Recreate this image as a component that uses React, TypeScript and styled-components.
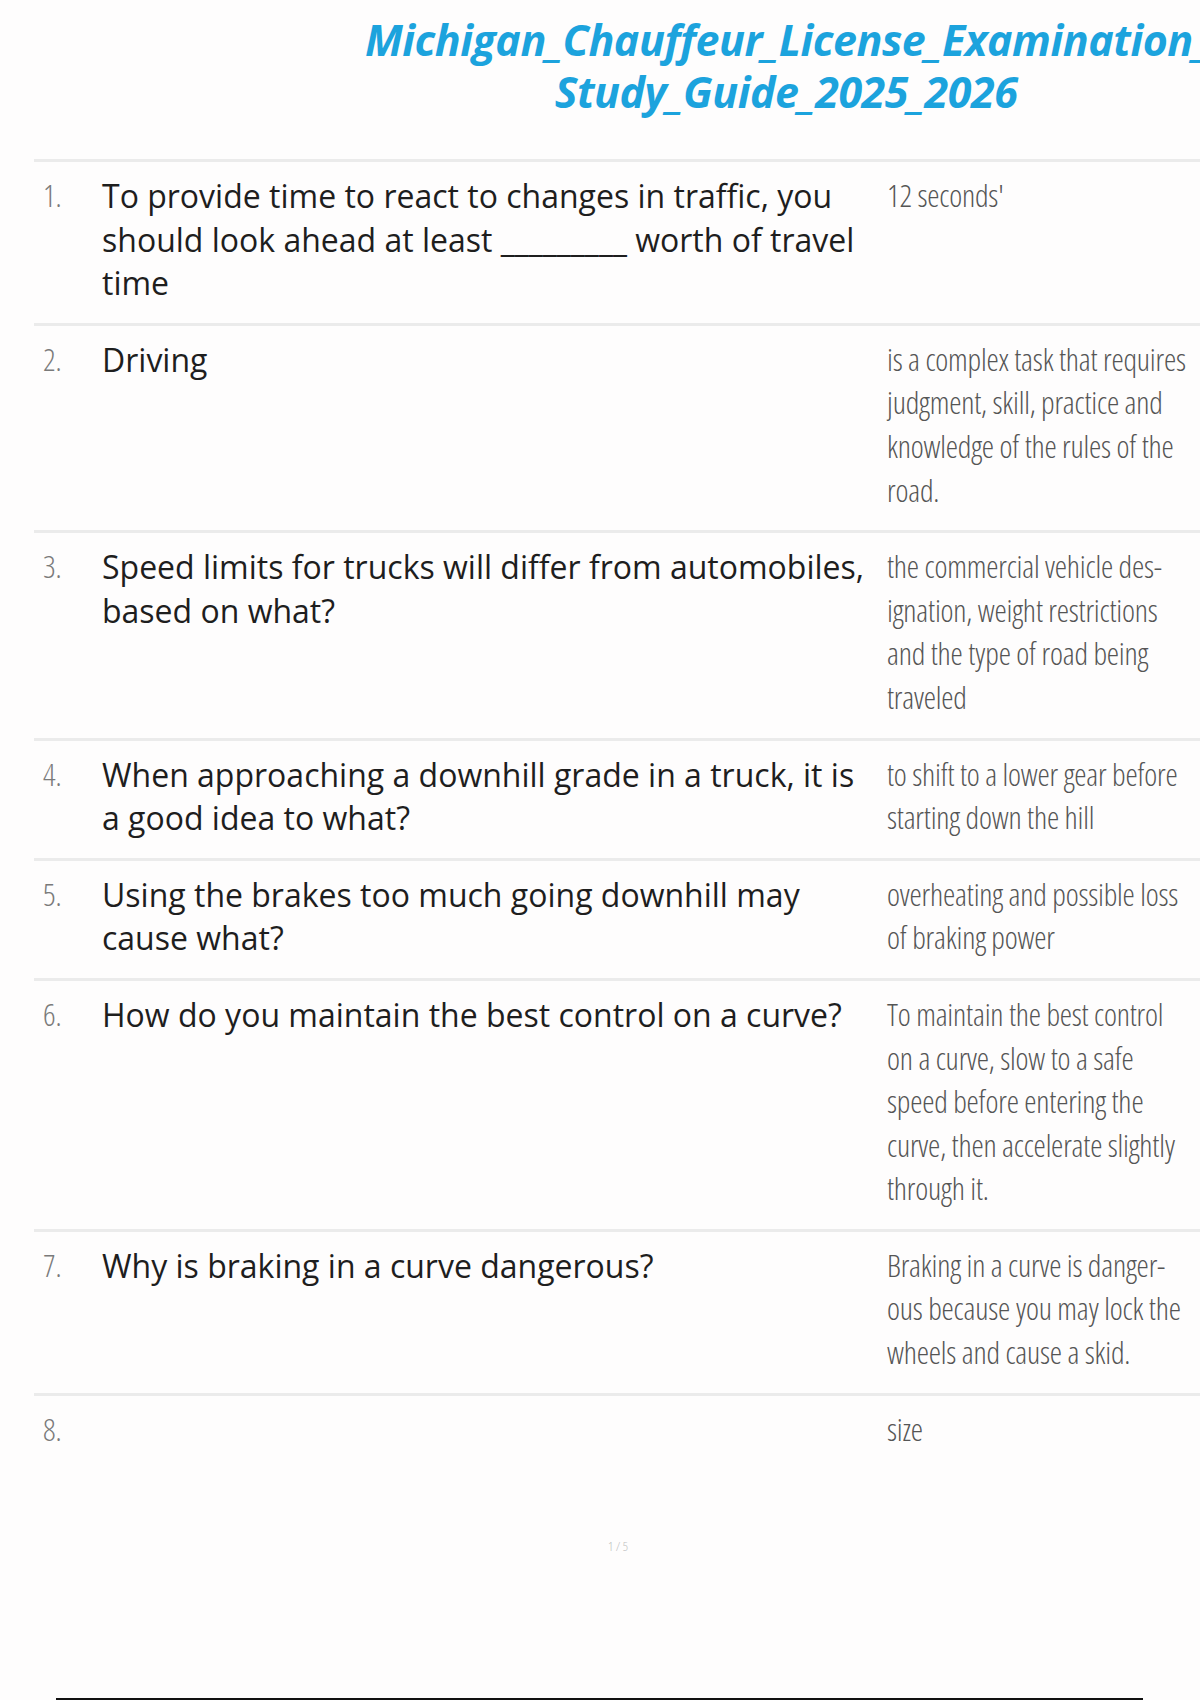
import React from "react";
import styled, { createGlobalStyle } from "styled-components";

const Global = createGlobalStyle`
  html, body {
    margin: 0;
    padding: 0;
    background: #fefdfd;
    overflow: hidden;
  }
`;

const Page = styled.div`
  width: 1200px;
  height: 1700px;
  overflow: hidden;
  display: flex;
  flex-direction: column;
  background: #fefdfd;
`;

const Header = styled.header`
  padding: 14px 0 0 365px;
  width: 1207px;
  height: 159px;
  box-sizing: border-box;
  flex-shrink: 0;
`;

const Title = styled.h1`
  margin: 0;
  font-family: "Open Sans", "Noto Sans", sans-serif;
  font-style: italic;
  font-weight: 700;
  font-size: 43px;
  line-height: 52px;
  color: #1ca3dd;
  white-space: nowrap;
  letter-spacing: -0.5px;
`;

const TitleLine = styled.span<{ $start?: boolean }>`
  display: block;
  text-align: ${(p) => (p.$start ? "left" : "center")};
`;

const Table = styled.div`
  margin-left: 34px;
  width: 1190px;
  display: flex;
  flex-direction: column;
`;

const Row = styled.div`
  display: grid;
  grid-template-columns: 68px 785px 1fr;
  border-top: 3px solid #ebebeb;
  padding: 12px 0 18px;
  font-size: 31px;
  line-height: 43.6px;
`;

const Num = styled.div`
  padding-left: 9px;
  font-family: "Open Sans", sans-serif;
  font-stretch: 75%;
  font-weight: 300;
  color: #7a7a7a;
`;

const Question = styled.div`
  font-family: "Open Sans", "Noto Sans", sans-serif;
  font-size: 32px;
  font-weight: 400;
  color: #1e1e1e;
  padding-right: 8px;
`;

const Answer = styled.div`
  font-family: "Open Sans", sans-serif;
  font-stretch: 75%;
  font-weight: 300;
  color: #555;
  width: 300px;
  letter-spacing: -0.2px;
`;

const Footer = styled.div`
  margin-top: 68px;
  text-align: center;
  width: 1236px;
  font-family: "Open Sans", sans-serif;
  font-stretch: 75%;
  font-weight: 300;
  font-size: 13px;
  color: #bdbdbd;
`;

const BottomRule = styled.div`
  margin: auto 0 0 56px;
  width: 1087px;
  height: 2px;
  background: #111;
  flex-shrink: 0;
`;

type Item = { n: string; q: string; a: string };

const items: Item[] = [
  {
    n: "1.",
    q: "To provide time to react to changes in traffic, you should look ahead at least _________ worth of travel time",
    a: "12 seconds'",
  },
  {
    n: "2.",
    q: "Driving",
    a: "is a complex task that requires judgment, skill, practice and knowledge of the rules of the road.",
  },
  {
    n: "3.",
    q: "Speed limits for trucks will differ from automobiles, based on what?",
    a: "the commercial vehicle des\u00ADignation, weight restrictions and the type of road being traveled",
  },
  {
    n: "4.",
    q: "When approaching a downhill grade in a truck, it is a good idea to what?",
    a: "to shift to a lower gear before starting down the hill",
  },
  {
    n: "5.",
    q: "Using the brakes too much going downhill may cause what?",
    a: "overheating and possible loss of braking power",
  },
  {
    n: "6.",
    q: "How do you maintain the best control on a curve?",
    a: "To maintain the best control on a curve, slow to a safe speed before entering the curve, then accelerate slightly through it.",
  },
  {
    n: "7.",
    q: "Why is braking in a curve dangerous?",
    a: "Braking in a curve is danger\u00ADous because you may lock the wheels and cause a skid.",
  },
  { n: "8.", q: "", a: "size" },
];

export default function App() {
  return (
    <Page>
      <Global />
      <Header>
        <Title>
          <TitleLine $start>Michigan_Chauffeur_License_Examination_</TitleLine>
          <TitleLine>Study_Guide_2025_2026</TitleLine>
        </Title>
      </Header>
      <Table>
        {items.map((it) => (
          <Row key={it.n}>
            <Num>{it.n}</Num>
            <Question>{it.q}</Question>
            <Answer>{it.a}</Answer>
          </Row>
        ))}
      </Table>
      <Footer>1 / 5</Footer>
      <BottomRule />
    </Page>
  );
}
